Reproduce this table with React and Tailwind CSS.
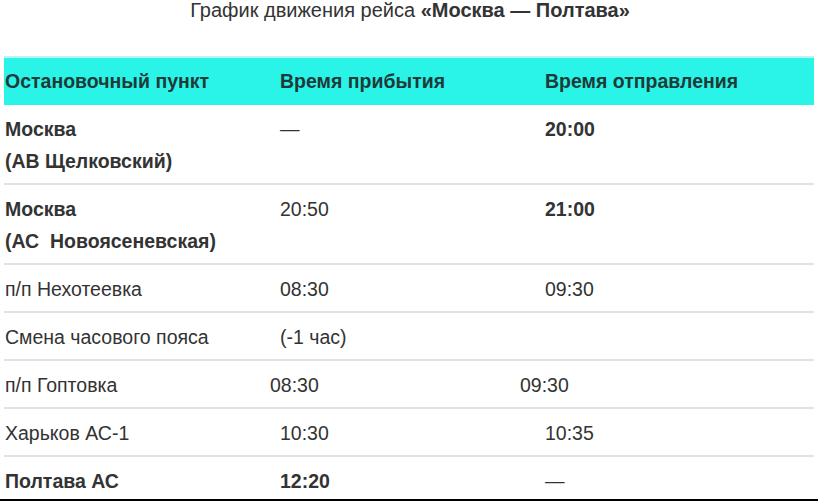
import React from "react";

const rows = [
  { a: ["Москва", "(АВ Щелковский)"], b: "—", c: "20:00", boldA: true, boldC: true },
  { a: ["Москва", "(АС\u00a0 Новоясеневская)"], b: "20:50", c: "21:00", boldA: true, boldC: true },
  { a: ["п/п Нехотеевка"], b: "08:30", c: "09:30" },
  { a: ["Смена часового пояса"], b: "(-1 час)", c: "" },
  { a: ["п/п Гоптовка"], b: "08:30", c: "09:30", shift: true },
  { a: ["Харьков АС-1"], b: "10:30", c: "10:35" },
  { a: ["Полтава АС"], b: "12:20", c: "—", boldA: true, boldB: true, last: true },
];

const App = () => {
  return (
    <div className="w-[820px] h-[503px] bg-white text-[#333] font-['Liberation_Sans',Arial,sans-serif] overflow-hidden">
      {/* Заголовок */}
      <h1 className="text-center text-[20px] leading-[20px]">
        График движения рейса <strong className="font-bold">«Москва — Полтава»</strong>
      </h1>

      <div className="ml-[4px] mt-[36px] w-[810px]">
        {/* Шапка таблицы */}
        <div className="grid grid-cols-[271px_265px_274px] bg-[#29f4e7] border-t-2 border-[#b8f6f1] h-[49px] items-center text-[19.5px] font-bold text-[#1f3a38]">
          <div className="pl-[1px]">Остановочный пункт</div>
          <div className="pl-[5px]">Время прибытия</div>
          <div className="pl-[5px]">Время отправления</div>
        </div>

        {rows.map((r, i) => (
          <div
            key={i}
            className={
              "grid grid-cols-[271px_265px_274px] text-[19.5px] leading-[32px] " +
              (r.last ? "pt-[8px] pb-[2px]" : "pt-[8px] pb-[6px] border-b-2 border-[#e2e2e2]")
            }
          >
            <div className={"pl-[1px] " + (r.boldA ? "font-bold" : "")}>
              {r.a.map((t, j) => (
                <div key={j}>{t}</div>
              ))}
            </div>
            <div className={(r.shift ? "pl-0 -ml-[5px] " : "pl-[5px] ") + (r.boldB ? "font-bold" : "")}>{r.b}</div>
            <div className={(r.shift ? "pl-0 -ml-[20px] " : "pl-[5px] ") + (r.boldC ? "font-bold" : "")}>{r.c}</div>
          </div>
        ))}
      </div>
      <div className="w-[818px] h-[2px] bg-black" />
    </div>
  );
};

export default App;
